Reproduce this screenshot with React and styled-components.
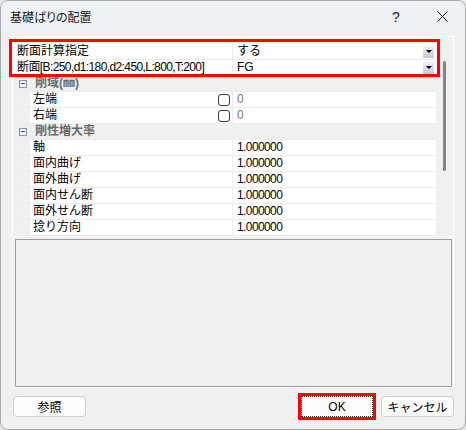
import React from 'react';
import styled, { createGlobalStyle } from 'styled-components';

const Global = createGlobalStyle`
  html, body { margin: 0; padding: 0; background: #e6e6e6; }
  body {
    font-family: "Liberation Sans", "Noto Sans CJK JP", sans-serif;
    font-size: 12px;
    color: #000;
  }
  * { box-sizing: border-box; }
`;

const Window = styled.div`
  width: 466px;
  height: 430px;
  border: 1px solid #a9a9a9;
  border-radius: 8px;
  background: #f0f0f0;
  overflow: hidden;
  display: flex;
  flex-direction: column;
`;

const TitleBar = styled.div`
  height: 31px;
  flex: none;
  background: #eef2f6;
  display: flex;
  align-items: center;
  padding-left: 9px;
`;

const Title = styled.div`
  flex: 1;
  font-family: "Noto Sans CJK JP", sans-serif;
  font-feature-settings: "palt";
  font-size: 12px;
  color: #1a1a1a;
  padding-bottom: 1px;
`;

const CaptionButton = styled.div`
  width: 46px;
  height: 31px;
  display: flex;
  align-items: center;
  justify-content: center;
  font-family: "Liberation Sans", sans-serif;
  font-size: 14px;
  color: #1a1a1a;
`;

const Body = styled.div`
  flex: 1;
  padding: 4px 11px 0;
  display: flex;
  flex-direction: column;
`;

const Frame = styled.div`
  height: 352px;
  border: 1px solid #fff;
  display: flex;
  flex-direction: column;
`;

const Grid = styled.div`
  height: 200px;
  flex: none;
  border-bottom: 1px solid #fff;
  padding-top: 7px;
  display: flex;
  background: #f0f0f0;
`;

const List = styled.div`
  width: 423px;
  display: flex;
  flex-direction: column;
`;

const ScrollCol = styled.div`
  flex: 1;
  padding: 17px 0 0 7px;
`;

const Thumb = styled.div`
  width: 3px;
  height: 110px;
  border-radius: 2px;
  background: #858585;
`;

const Highlight = styled.div`
  position: relative;
  display: flex;
  flex-direction: column;
  &::after {
    content: "";
    position: absolute;
    top: -5px;
    left: -4px;
    right: -4px;
    bottom: -1px;
    border: 3px solid #ff0000;
    pointer-events: none;
  }
`;

const Row = styled.div`
  display: grid;
  grid-template-columns: 17px 203px 1fr;
  height: 16px;
  border-bottom: 1px solid #ececec;
  background: ${(p) => (p.$category ? '#f0f0f0' : '#fff')};
`;

const Gutter = styled.div`
  background: #f0f0f0;
`;

const LabelCell = styled.div`
  grid-column: ${(p) => (p.$wide ? '1 / 3' : 'auto')};
  padding-left: ${(p) => (p.$wide ? '4px' : '3px')};
  border-right: 1px solid #ececec;
  display: flex;
  align-items: center;
  line-height: 15px;
  white-space: nowrap;
  overflow: hidden;
`;

const Text = styled.span`
  letter-spacing: ${(p) => (p.$tight ? '-0.6px' : '0')};
  color: ${(p) => (p.$dim ? '#777' : '#000')};
`;

const ValueCell = styled.div`
  padding-left: 4px;
  display: flex;
  align-items: center;
  line-height: 15px;
  white-space: nowrap;
`;

const CategoryCell = styled.div`
  grid-column: 1 / -1;
  display: flex;
  align-items: center;
  padding-left: 6px;
  gap: 8px;
  font-weight: bold;
  color: #6a6a6a;
  line-height: 15px;
`;

const Toggle = styled.span`
  width: 8px;
  height: 8px;
  border: 1px solid #8292ab;
  background: #fff;
  display: flex;
  align-items: center;
  justify-content: center;
  &::before {
    content: "";
    width: 4px;
    height: 1px;
    background: #2b4a7a;
  }
`;

const Check = styled.span`
  width: 12px;
  height: 12px;
  margin-left: auto;
  margin-right: 2px;
  border: 1px solid #3a3a3a;
  border-radius: 3px;
  background: #fff;
`;

const DropButton = styled.span`
  width: 11px;
  height: 13px;
  margin-left: auto;
  margin-right: 2px;
  background: linear-gradient(#f7f7fb, #c6c6d3);
  display: flex;
  align-items: center;
  justify-content: center;
  &::before {
    content: "";
    border-left: 3px solid transparent;
    border-right: 3px solid transparent;
    border-top: 3px solid #000;
  }
`;

const Description = styled.div`
  height: 148px;
  margin: 2px 1px 0 2px;
  border: 1px solid #a0a0a0;
  background: #f0f0f0;
`;

const Footer = styled.div`
  display: flex;
  align-items: center;
  margin-top: 8px;
  padding-left: 1px;
`;

const Spacer = styled.div`
  flex: 1;
`;

const Button = styled.button`
  width: ${(p) => p.$w || 73}px;
  height: 21px;
  padding: 0;
  margin: 0;
  border: 1px ${(p) => (p.$focus ? 'dotted #222' : 'solid #d0d0d0')};
  border-radius: ${(p) => (p.$focus ? '0' : '4px')};
  background: #fdfdfd;
  font-family: "Liberation Sans", "Noto Sans CJK JP", sans-serif;
  font-size: 12px;
  color: #000;
`;

const OkWrap = styled.div`
  position: relative;
  display: flex;
  &::after {
    content: "";
    position: absolute;
    inset: -3px;
    border: 3px solid #ff0000;
    pointer-events: none;
  }
`;

const CancelWrap = styled.div`
  margin-left: 8px;
  display: flex;
`;

const top = [
  { label: '断面計算指定', value: 'する' },
  { label: '断面[B:250,d1:180,d2:450,L:800,T:200]', value: 'FG', tight: true },
];

const sections = [
  {
    title: '剛域(㎜)',
    rows: [
      { label: '左端', value: '0', check: true },
      { label: '右端', value: '0', check: true },
    ],
  },
  {
    title: '剛性増大率',
    rows: ['軸', '面内曲げ', '面外曲げ', '面内せん断', '面外せん断', '捻り方向'].map((l) => ({
      label: l,
      value: '1.000000',
    })),
  },
];

export default function App() {
  return (
    <>
      <Global />
      <Window>
        <TitleBar>
          <Title>基礎ばりの配置</Title>
          <CaptionButton>?</CaptionButton>
          <CaptionButton>
            <svg width="11" height="11" viewBox="0 0 11 11">
              <path d="M0.5 0.5 L10.5 10.5 M10.5 0.5 L0.5 10.5" stroke="#1a1a1a" strokeWidth="1" />
            </svg>
          </CaptionButton>
        </TitleBar>
        <Body>
          <Frame>
            <Grid>
              <List>
                <Highlight>
                  {top.map((r) => (
                    <Row key={r.label}>
                      <LabelCell $wide>
                        <Text $tight={r.tight}>{r.label}</Text>
                      </LabelCell>
                      <ValueCell>
                        <Text>{r.value}</Text>
                        <DropButton />
                      </ValueCell>
                    </Row>
                  ))}
                </Highlight>
                {sections.map((s) => (
                  <React.Fragment key={s.title}>
                    <Row $category>
                      <CategoryCell>
                        <Toggle />
                        <span>{s.title}</span>
                      </CategoryCell>
                    </Row>
                    {s.rows.map((r) => (
                      <Row key={r.label}>
                        <Gutter />
                        <LabelCell>
                          <Text>{r.label}</Text>
                          {r.check && <Check />}
                        </LabelCell>
                        <ValueCell>
                          <Text $tight $dim={r.check}>{r.value}</Text>
                        </ValueCell>
                      </Row>
                    ))}
                  </React.Fragment>
                ))}
              </List>
              <ScrollCol>
                <Thumb />
              </ScrollCol>
            </Grid>
            <Description />
          </Frame>
          <Footer>
            <Button>参照</Button>
            <Spacer />
            <OkWrap>
              <Button $w={72} $focus>OK</Button>
            </OkWrap>
            <CancelWrap>
              <Button>キャンセル</Button>
            </CancelWrap>
          </Footer>
        </Body>
      </Window>
    </>
  );
}
